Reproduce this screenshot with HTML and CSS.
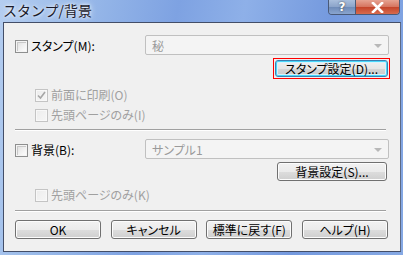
FILE: index.html
```html
<!DOCTYPE html>
<html lang="ja">
<head>
<meta charset="utf-8">
<link rel="stylesheet" href="styles.css">
</head>
<body>
<div class="window">
  <div class="titlebar">
    <span class="title">スタンプ/背景</span>
    <div class="caption-btns">
      <span class="cap help">?</span>
      <span class="cap close">
        <svg width="13" height="11" viewBox="0 0 13 11"><path d="M2 1 L11 10 M11 1 L2 10" stroke="#fff" stroke-width="2.6" stroke-linecap="square"/></svg>
      </span>
    </div>
  </div>
  <div class="client">
    <div class="row main-row">
      <label class="chk"><span class="box"></span><span>スタンプ(M):</span></label>
      <div class="combo"><span>秘</span><span class="arrow"></span></div>
    </div>
    <div class="btn-row first-btn">
      <span class="mark"><span class="btn focused">スタンプ設定(D)...</span></span>
    </div>
    <div class="sub">
      <label class="chk disabled"><span class="box checked">
        <svg width="11" height="11" viewBox="0 0 11 11"><path d="M2 5.5 L4.5 8 L9 2" stroke="#a6a6a6" stroke-width="1.6" fill="none"/></svg>
      </span><span>前面に印刷(O)</span></label>
      <label class="chk disabled"><span class="box"></span><span>先頭ページのみ(I)</span></label>
    </div>
    <div class="sep sep1"></div>
    <div class="row main-row bg-row">
      <label class="chk"><span class="box"></span><span>背景(B):</span></label>
      <div class="combo"><span>サンプル1</span><span class="arrow"></span></div>
    </div>
    <div class="btn-row">
      <span class="btn setbtn">背景設定(S)...</span>
    </div>
    <div class="sub sub2">
      <label class="chk disabled"><span class="box"></span><span>先頭ページのみ(K)</span></label>
    </div>
    <div class="sep sep2"></div>
    <div class="footer">
      <span class="btn fbtn">OK</span>
      <span class="btn fbtn">キャンセル</span>
      <span class="btn fbtn">標準に戻す(F)</span>
      <span class="btn fbtn">ヘルプ(H)</span>
    </div>
  </div>
</div>
</body>
</html>
```
FILE: styles.css
```css
html, body {
  margin: 0;
  padding: 0;
  background: #7b9fe0;
}
.window {
  width: 403px;
  height: 255px;
  box-sizing: border-box;
  padding: 0 2px 3px 3px;
  display: flex;
  flex-direction: column;
  background: linear-gradient(100deg, #b4cdf0 0%, #9dbdea 15%, #7ea2e2 40%, #8eb0e8 55%, #7499de 75%, #86a9e4 100%);
  font-family: "Noto Sans CJK JP", "Noto Sans", sans-serif;
  font-feature-settings: "palt" 1;
  font-size: 12px;
  color: #000;
}
.titlebar {
  height: 22px;
  display: flex;
  align-items: flex-start;
  justify-content: space-between;
  flex: none;
}
.title {
  font-size: 14px;
  line-height: 18px;
  padding-top: 1px;
  color: #1a1a2a;
  font-feature-settings: normal;
  text-shadow: 0 0 6px rgba(255,255,255,0.9), 0 0 3px rgba(255,255,255,0.8);
}
.caption-btns {
  display: flex;
  height: 14px;
  margin-right: 1px;
  border: 1px solid #4a5a78;
  border-top: none;
  border-radius: 0 0 4px 4px;
  overflow: hidden;
}
.cap {
  display: flex;
  align-items: center;
  justify-content: center;
  color: #fff;
  font-weight: bold;
  font-size: 12px;
  line-height: 14px;
}
.help {
  width: 26px;
  background: linear-gradient(#a9bedc, #8aa3c9 50%, #6e8bb8 51%, #8aa5cf);
  border-right: 1px solid #4a5a78;
  font-family: "DejaVu Sans", sans-serif;
  text-shadow: 0 0 2px #333;
}
.close {
  width: 43px;
  background: linear-gradient(#e6a392, #d5735e 50%, #c4442a 51%, #d76b4e);
}
.client {
  flex: 1;
  background: #f0f0f0;
  border: 1px solid #434e68;
  border-right-color: #5d6a86;
  padding: 12px 11px 0 11px;
  display: flex;
  flex-direction: column;
}
.row {
  display: flex;
  align-items: center;
  justify-content: space-between;
  height: 20px;
}
.main-row .chk {
  padding-top: 2px;
}
.chk {
  display: flex;
  align-items: center;
  gap: 3px;
  line-height: 16px;
  height: 16px;
  white-space: nowrap;
}
.box {
  width: 11px;
  height: 11px;
  border: 1px solid #8e8f8f;
  background: linear-gradient(135deg, #dcdcdc, #f6f6f6 70%, #ffffff);
  box-shadow: inset 0 0 0 1px #f4f4f4, inset 1px 1px 0 1px #c8c8c8;
  display: flex;
  align-items: center;
  justify-content: center;
  flex: none;
}
.disabled {
  color: #a0a0a0;
}
.disabled .box {
  border-color: #c4c4c4;
  background: linear-gradient(135deg, #ececec, #f6f6f6);
  box-shadow: inset 0 0 0 1px #f8f8f8;
}
.box.checked svg { display: block; }
.combo {
  height: 18px;
  border: 1px solid #c0c0c0;
  border-radius: 2px;
  background: #f4f4f4;
  color: #9a9a9a;
  display: flex;
  align-items: center;
  justify-content: space-between;
  padding: 0 6px 0 6px;
  box-sizing: content-box;
  width: 230px;
}
.arrow {
  width: 0;
  height: 0;
  border-left: 4px solid transparent;
  border-right: 4px solid transparent;
  border-top: 4px solid #b8b8b8;
  margin-top: 2px;
}
.btn-row {
  display: flex;
  justify-content: flex-end;
  margin-top: 3px;
}
.first-btn {
  margin-right: -1px;
}
.mark {
  border: 1px solid #ff0000;
  padding: 1px;
  display: flex;
}
.btn {
  display: flex;
  align-items: center;
  justify-content: center;
  height: 17px;
  border: 1px solid #707070;
  border-radius: 3px;
  background: linear-gradient(#f2f2f2, #ebebeb 50%, #dddddd 51%, #cfcfcf);
  box-shadow: inset 0 0 0 1px #fcfcfc;
  white-space: nowrap;
  box-sizing: border-box;
}
.btn.focused {
  width: 113px;
  height: 17px;
  border-color: #3c7fb1;
  box-shadow: inset 0 0 0 1px #48d7fb, inset 0 0 0 2px #d8f2fb;
  background: linear-gradient(#f0f0f0, #e6e6e6 50%, #d6d6d6 51%, #cacaca);
}
.setbtn {
  width: 110px;
  height: 19px;
  margin-right: 2px;
}
.sub {
  display: flex;
  flex-direction: column;
  gap: 4px;
  padding-left: 20px;
  margin-top: 8px;
}
.sep {
  height: 0;
  border-top: 1px solid #a0a0a0;
  border-bottom: 1px solid #ffffff;
  margin-right: 3px;
}
.sep1 { margin-top: 6px; }
.bg-row { margin-top: 8px; }
.sub2 { margin-top: 6px; }
.sep2 { margin-top: 7px; }
.footer {
  display: flex;
  justify-content: space-between;
  margin-top: 8px;
  margin-right: 1px;
}
.fbtn {
  width: 86px;
  height: 19px;
}
```
